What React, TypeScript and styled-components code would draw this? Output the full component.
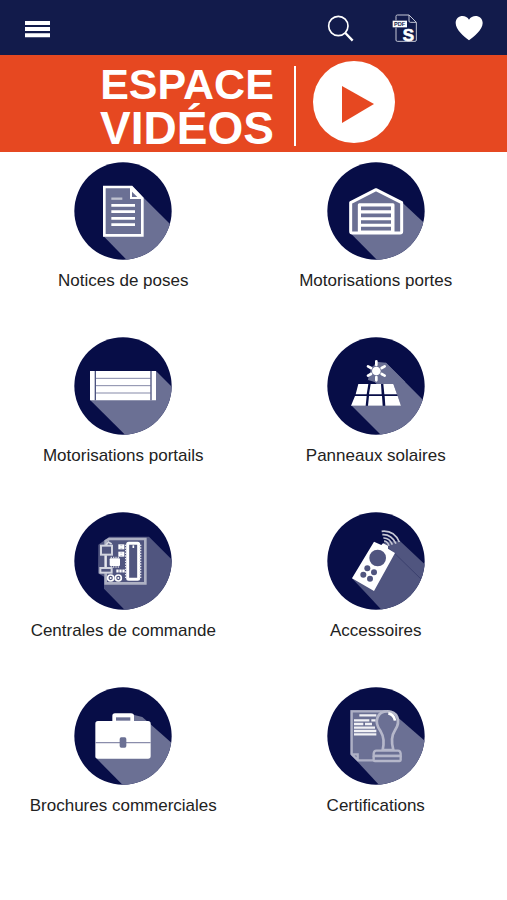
import React, { useId } from "react";
import styled, { createGlobalStyle } from "styled-components";

const navy = "#121b4b";
const disc = "#070d47";
const shade = "#6b7094";
const dim = "#50557f";

const GlobalStyle = createGlobalStyle`
  body {
    margin: 0;
    background: #fff;
    color: #222;
    font-family: "Liberation Sans", Arial, Helvetica, sans-serif;
  }
`;

const Header = styled.header`
  display: flex;
  align-items: center;
  justify-content: space-between;
  height: 55px;
  padding: 0 24px;
  background: ${navy};
`;

const Actions = styled.nav`
  display: flex;
  gap: 36px;
`;

const IconButton = styled.button`
  display: block;
  padding: 0;
  border: 0;
  background: none;
  color: #fff;
  cursor: pointer;

  svg {
    display: block;
    width: 28px;
    height: 28px;
  }
`;

const Banner = styled.a`
  display: flex;
  justify-content: center;
  align-items: center;
  height: 97px;
  padding-right: 12px;
  background: #e64821;
  color: #fff;
  text-decoration: none;
`;

const BannerTitle = styled.span`
  display: flex;
  flex-direction: column;
  align-items: center;
  padding-top: 4px;
  font-weight: bold;
`;

const TitleLine = styled.span<{ $size: number }>`
  font-size: ${(p) => p.$size}px;
  line-height: 44px;
`;

const Divider = styled.span`
  width: 2px;
  height: 80px;
  margin: 5px 17px 0 20px;
  background: #fff;
`;

const PlayIcon = styled.svg`
  width: 82px;
  height: 82px;
  margin-bottom: 3px;
`;

const Grid = styled.main`
  display: grid;
  grid-template-columns: 1fr 1fr;
  grid-auto-rows: 175px;
  column-gap: 6px;
  padding: 10px 8px 0 0;
`;

const Tile = styled.a`
  display: flex;
  flex-direction: column;
  align-items: center;
  color: inherit;
  text-decoration: none;
`;

const TileIcon = styled.svg`
  width: 98px;
  height: 98px;
`;

const TileLabel = styled.span`
  margin-top: 11px;
  font-size: 17px;
  line-height: 20px;
  white-space: nowrap;
`;

type DiscProps = { top: number; shadow: string; tone?: string; children: React.ReactNode };

function Disc({ top, shadow, tone = shade, children }: DiscProps) {
  const id = useId();
  return (
    <TileIcon viewBox={`27 ${top} 294 294`} aria-hidden="true">
      <clipPath id={id}>
        <circle cx="174" cy={top + 147} r="146" />
      </clipPath>
      <circle cx="174" cy={top + 147} r="146" fill={disc} />
      <path d={shadow} fill={tone} clipPath={`url(#${id})`} />
      {children}
    </TileIcon>
  );
}

const DocumentIcon = () => (
  <Disc top={21} shadow="M116 95H203L330 222V330H200L116 244Z">
    <path d="M118 96H200L232 130V241H118Z" fill={shade} stroke="#fff" strokeWidth="8" />
    <path d="M195 94V132H234L200 94Z" fill="#fff" />
    <path d="M201 110V126H217Z" fill={shade} />
    <path d="M139 131H172" stroke="#bfc1cf" strokeWidth="7" />
    <path d="M139 151H210M139 170H210M139 190H210M139 209H210" stroke="#fff" strokeWidth="8" />
  </Disc>
);

const GarageIcon = () => (
  <Disc top={21} shadow="M97 234L97 142L174 103L252 142L330 215V330H192Z">
    <path d="M98 143L174 104L251 143V229Q251 234 246 234H103Q98 234 98 229Z" fill={shade} stroke="#fff" strokeWidth="9" strokeLinejoin="round" />
    <path d="M124 234V149H225V234" fill="#fff" stroke="#fff" strokeWidth="9" strokeLinejoin="round" />
    <path d="M129 160H219M129 181H219M129 201H219M129 221H219" stroke={shade} strokeWidth="11" />
  </Disc>
);

const GateIcon = () => (
  <Disc top={21} shadow="M76 211L273 123L330 180V330H196Z">
    <path d="M75 123H273V211H75Z" fill="#fff" />
    <path d="M92 145H257M92 167H257M92 189H257" stroke="#8589a8" strokeWidth="3" />
    <path d="M91 123V211M258 123V211" stroke="#4c537f" strokeWidth="4" />
  </Disc>
);

const SolarIcon = () => (
  <Disc top={21} shadow="M102 228L150 150L152 137L174 95L204 98L330 225V330H204Z">
    <path d="M121 162L150 150L190 162H226L249 227H102Z" fill={disc} />
    <path d="M150 137L174 106L204 98L262 156L226 162H176Z" fill={shade} />
    <path d="M121 162H151L146 193H113ZM158 162H189L191 193H153ZM196 162H226L237 193H199ZM111 198H146L143 227H99ZM153 198H192L194 227H150ZM200 198H239L249 227H202Z" fill="#fff" />
    <circle cx="175" cy="123" r="18" fill={shade} />
    <circle cx="175" cy="123" r="13" fill="#fff" />
    <path d="M175 94V105M175 141V151M150 109L159 114M200 109L191 114M150 137L159 132M200 137L191 132" stroke="#fff" strokeWidth="8" strokeLinecap="round" />
  </Disc>
);

const BoardIcon = () => (
  <Disc top={18} tone={dim} shadow="M100 116L133 92H252L330 170V330H197L117 248V212L99 202Z">
    <path d="M122 119V105L132 99H241V232H122V202M122 147V184" fill="none" stroke="#aeb1c3" strokeWidth="8" />
    <path d="M122 119L130 108L140 114" fill="none" stroke="#d9dae4" strokeWidth="5" />
    <rect x="108" y="119" width="33" height="27" fill={dim} stroke="#d2d4df" strokeWidth="6" />
    <rect x="106" y="186" width="34" height="14" fill={dim} stroke="#d2d4df" strokeWidth="6" />
    <path d="M122 149V184" stroke="#e6e7ee" strokeWidth="6" />
    <rect x="188" y="112" width="33" height="108" rx="3" fill={dim} stroke="#fff" strokeWidth="9" />
    <path d="M183 116V218M226 116V218" stroke="#e3e4ec" strokeWidth="6" strokeDasharray="4 4" />
    <path d="M205 118V126" stroke="#fff" strokeWidth="5" />
    <rect x="160" y="115" width="18" height="15" fill="#fff" />
    <rect x="160" y="137" width="18" height="15" fill="#fff" />
    <path d="M166 119H172M166 127H172M166 141H172M166 149H172" stroke="#9da0b9" strokeWidth="2" />
    <rect x="134" y="157" width="31" height="23" rx="3" fill="#fff" />
    <path d="M137 154H164M137 183H164" stroke="#d2d4df" strokeWidth="4" strokeDasharray="4 3" />
    <path d="M154 195H179" stroke="#fff" strokeWidth="9" strokeDasharray="7 2" />
    <circle cx="137" cy="216" r="9" fill={dim} stroke="#fff" strokeWidth="5" />
    <circle cx="160" cy="216" r="9" fill={dim} stroke="#fff" strokeWidth="5" />
    <circle cx="137" cy="216" r="3" fill="#fff" />
    <circle cx="160" cy="216" r="3" fill="#fff" />
  </Disc>
);

const RemoteIcon = () => (
  <Disc top={18} tone={dim} shadow="M102 217L200 108L246 105L330 184V330H208Z">
    <path d="M211 127L230 142L309 219" fill="none" stroke="#3b406e" strokeWidth="3" />
    <path d="M168 107L190 117L195 112L210 119V128L231 141L168 255L102 217Z" fill="#fff" />
    <circle cx="179" cy="156" r="25" fill={dim} />
    <circle cx="148" cy="187" r="9" fill={dim} />
    <circle cx="168" cy="199" r="9" fill={dim} />
    <circle cx="136" cy="206" r="9" fill={dim} />
    <circle cx="156" cy="218" r="9" fill={dim} />
    <path d="M191 76Q228 72 244 108M193 86Q220 84 234 113M196 96Q214 95 223 116M198 105Q208 105 213 119" fill="none" stroke="#c6c8d6" strokeWidth="5" />
  </Disc>
);

const BriefcaseIcon = () => (
  <Disc top={18} shadow="M91 229L205 101L232 108L330 195V330H191Z">
    <path d="M91 128Q91 120 99 120H249Q257 120 257 128V225Q257 233 249 233H99Q91 233 91 225Z" fill="#fff" />
    <path d="M147 124V105Q147 102 150 102H198Q202 102 202 105V124" fill="#fff" stroke="#fff" strokeWidth="10" strokeLinejoin="round" />
    <path d="M153 109H196V119H153Z" fill={shade} />
    <path d="M91 185H257" stroke="#8a8dab" strokeWidth="4" />
    <rect x="164" y="169" width="20" height="31" rx="5" fill={shade} />
  </Disc>
);

const StampIcon = () => (
  <Disc top={18} shadow="M97 87H214L330 188V330H200L97 219Z">
    <path d="M205 91H101V220L120 238H170M101 220H119V238" fill="none" stroke="#aeb0c5" strokeWidth="7" />
    <path d="M124 103H175M108 118H154M160 118H173M108 129H136M141 129H162M108 140H171M108 150H175M108 160H175" stroke="#f1f1f5" strokeWidth="7" />
    <path d="M194 207C200 180 196 164 188 151C165 120 179 91 208 91C238 91 250 119 231 148C221 163 219 182 226 207Z" fill={shade} stroke="#b5b7ca" strokeWidth="8" />
    <path d="M211 97Q228 100 231 119" fill="none" stroke="#fff" strokeWidth="8" />
    <path d="M175 209H240Q247 209 248 218V225H167V218Q168 209 175 209Z" fill={shade} stroke="#b5b7ca" strokeWidth="7" />
    <rect x="167" y="225" width="81" height="15" rx="3" fill={shade} stroke="#b5b7ca" strokeWidth="7" />
  </Disc>
);

const tiles = [
  { label: "Notices de poses", Icon: DocumentIcon },
  { label: "Motorisations portes", Icon: GarageIcon },
  { label: "Motorisations portails", Icon: GateIcon },
  { label: "Panneaux solaires", Icon: SolarIcon },
  { label: "Centrales de commande", Icon: BoardIcon },
  { label: "Accessoires", Icon: RemoteIcon },
  { label: "Brochures commerciales", Icon: BriefcaseIcon },
  { label: "Certifications", Icon: StampIcon },
];

export default function App() {
  return (
    <>
      <GlobalStyle />
      <Header>
        <IconButton type="button" aria-label="Menu">
          <svg viewBox="72 39 84 84">
            <path d="M75 66H150M75 84H150M75 103H150" stroke="currentColor" strokeWidth="12" />
          </svg>
        </IconButton>
        <Actions>
          <IconButton type="button" aria-label="Rechercher">
            <svg viewBox="981 39 84 84" fill="none" stroke="currentColor">
              <circle cx="1015" cy="75" r="29" strokeWidth="5" />
              <path d="M1036 96L1058 119" strokeWidth="7" />
            </svg>
          </IconButton>
          <IconButton type="button" aria-label="Documents PDF">
            <svg viewBox="1173 39 84 84" overflow="visible">
              <path d="M1188 58V46Q1188 42 1192 42H1227L1249 64V117Q1249 121 1245 121H1192Q1188 121 1188 117V80M1227 42V60Q1227 64 1231 64H1249" fill="none" stroke="#c5c8d6" strokeWidth="3" />
              <rect x="1178" y="59" width="43" height="20" fill="#fff" />
              <text x="1199" y="75" fontSize="17" fontWeight="bold" textAnchor="middle" fill={navy}>PDF</text>
              <text x="1225" y="121" fontSize="51" fontWeight="bold" textAnchor="middle" fill="#fff" stroke="#fff" strokeWidth="2">S</text>
            </svg>
          </IconButton>
          <IconButton type="button" aria-label="Favoris">
            <svg viewBox="1365 39 84 84">
              <path d="M1407 118C1392 106 1367 87 1367 66C1367 42 1397 38 1407 56C1417 38 1448 42 1448 66C1448 87 1422 106 1407 118Z" fill="currentColor" />
            </svg>
          </IconButton>
        </Actions>
      </Header>
      <Banner href="#videos">
        <BannerTitle>
          <TitleLine $size={43}>ESPACE</TitleLine>
          <TitleLine $size={46}>VIDÉOS</TitleLine>
        </BannerTitle>
        <Divider />
        <PlayIcon viewBox="0 0 82 82" aria-hidden="true">
          <circle cx="41" cy="41" r="41" fill="#fff" />
          <path d="M29 25L61 43L29 62Z" fill="#e64821" />
        </PlayIcon>
      </Banner>
      <Grid>
        {tiles.map(({ label, Icon }) => (
          <Tile key={label} href="#">
            <Icon />
            <TileLabel>{label}</TileLabel>
          </Tile>
        ))}
      </Grid>
    </>
  );
}
